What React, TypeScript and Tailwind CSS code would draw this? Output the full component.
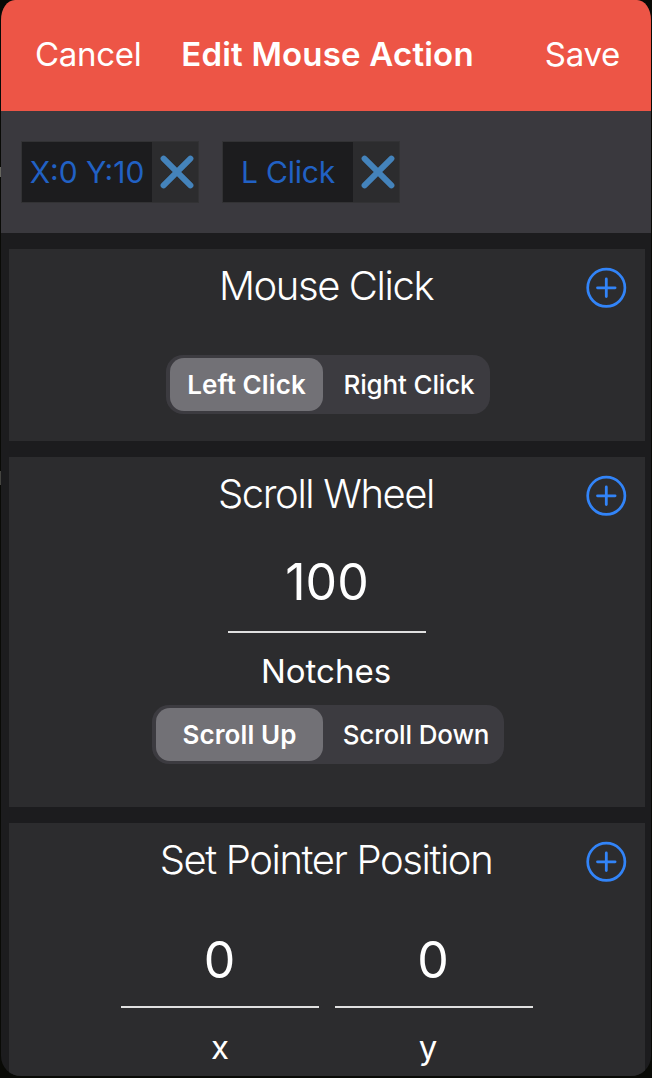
import { useState } from "react";
import { clsx } from "clsx";

interface SegmentedProps {
  options: string[];
  widths: string[];
}

const AddButton = ({ label }: { label: string }) => (
  <button aria-label={label} className="absolute right-[18px] top-[18px]">
    <svg width="41" height="41" viewBox="0 0 41 41" fill="none" stroke="#3284f8">
      <circle cx="20.3" cy="20.8" r="18.6" strokeWidth="2.7" />
      <path d="M20.3 12v17.6M11.5 20.8h17.6" strokeWidth="2.8" strokeLinecap="round" />
    </svg>
  </button>
);

const CardHeading = ({ title }: { title: string }) => (
  <>
    <h2 className="pr-[2px] text-center text-[40px] font-light leading-[48px] tracking-[-1.4px] whitespace-nowrap">
      {title}
    </h2>
    <AddButton label={`Add ${title}`} />
  </>
);

const Chip = ({ text, className }: { text: string; className?: string }) => (
  <div className="flex h-[62px] border border-[#323234]">
    <span
      className={clsx(
        "flex w-[130px] items-center justify-center whitespace-nowrap bg-[#1c1c1e] text-[30px] text-[#2161c4]",
        className
      )}
    >
      {text}
    </span>
    <button
      aria-label={`Remove ${text}`}
      className="flex w-[46px] items-center justify-center bg-[#2c2c2e] pb-px pl-[4px]"
    >
      <svg width="34" height="34" viewBox="0 0 34 34" fill="none" className="shrink-0">
        <path
          d="M3.6 3.6l26.8 26.8M30.4 3.6l-26.8 26.8"
          stroke="#4483bb"
          strokeWidth="6"
          strokeLinecap="round"
        />
      </svg>
    </button>
  </div>
);

const Segmented = ({ options, widths }: SegmentedProps) => {
  const [selected, setSelected] = useState(0);

  return (
    <div className="flex h-[59px] rounded-[17px] bg-[#3c3b40] px-1 py-[3px]">
      {options.map((option, i) => (
        <button
          key={option}
          onClick={() => setSelected(i)}
          className={clsx(
            "rounded-[14px] whitespace-nowrap text-[26px] leading-[53px]",
            widths[i],
            i === selected
              ? "bg-[#727176] font-semibold tracking-[0.1px]"
              : "font-medium tracking-[-0.15px]"
          )}
        >
          {option}
        </button>
      ))}
    </div>
  );
};

const NumberField = ({ value, className }: { value: string; className?: string }) => (
  <div
    className={clsx(
      "flex h-[102px] w-[198px] items-center justify-center border-b-2 border-[#e0e0e0] text-[50px]",
      className
    )}
  >
    {value}
  </div>
);

export default function App() {
  return (
    <div className="relative h-[1078px] w-[652px] overflow-hidden bg-[#090a06] px-px font-['Inter',sans-serif] text-white">
      <div className="absolute left-0 top-[167px] h-[10px] w-px bg-[#66665f]" />
      <div className="absolute left-0 top-[471px] h-[14px] w-px bg-[#444440]" />
      <div className="flex h-[1076px] flex-col overflow-hidden rounded-b-[20px] rounded-tl-[14px_20px] rounded-tr-[14px_20px] bg-[#1c1c1e]">
        <header className="grid h-[111px] shrink-0 grid-cols-[1fr_auto_1fr] items-center bg-[#ed5546] pl-[34px] pr-[31px] pb-px text-[33px]">
          <button className="text-left tracking-[-0.3px]">Cancel</button>
          <h1 className="font-semibold tracking-[0.2px]">Edit Mouse Action</h1>
          <button className="text-right tracking-[-0.3px]">Save</button>
        </header>

        <div className="flex h-[122px] shrink-0 items-center gap-[23px] bg-[#3a393e] pl-5">
          <Chip text="X:0 Y:10" />
          <Chip text="L Click" className="tracking-[-0.2px]" />
        </div>

        <main className="flex flex-col gap-4 pl-2 pr-[6px] pt-4">
          <section className="relative flex h-[192px] shrink-0 flex-col items-center bg-[#2c2c2e] pt-[13px]">
            <CardHeading title="Mouse Click" />
            <div className="mt-[45px] pl-[2px]">
              <Segmented
                options={["Left Click", "Right Click"]}
                widths={["w-[153px]", "w-[163px] pl-[9px]"]}
              />
            </div>
          </section>

          <section className="relative flex h-[350px] shrink-0 flex-col items-center bg-[#2c2c2e] pt-[13px]">
            <CardHeading title="Scroll Wheel" />
            <div className="mt-[13px]">
              <NumberField value="100" className="pt-[2px]" />
            </div>
            <p className="mt-[18px] pr-[2px] text-[33px] leading-[40px]">Notches</p>
            <div className="mt-[14px] pl-[2px]">
              <Segmented
                options={["Scroll Up", "Scroll Down"]}
                widths={["w-[167px]", "w-[177px] pl-[9px]"]}
              />
            </div>
          </section>

          <section className="relative flex h-[253px] shrink-0 flex-col items-center bg-[#2c2c2e] pt-[13px]">
            <CardHeading title="Set Pointer Position" />
            <div className="mt-[22px] flex gap-4">
              <div className="flex flex-col items-center">
                <NumberField value="0" className="pt-[9px] pr-px" />
                <span className="mt-[19px] text-[33px] leading-[40px]">x</span>
              </div>
              <div className="flex flex-col items-center">
                <NumberField value="0" className="pt-[9px] pr-[2px]" />
                <span className="mt-[19px] pr-3 text-[33px] leading-[40px]">y</span>
              </div>
            </div>
          </section>
        </main>
      </div>
    </div>
  );
}
